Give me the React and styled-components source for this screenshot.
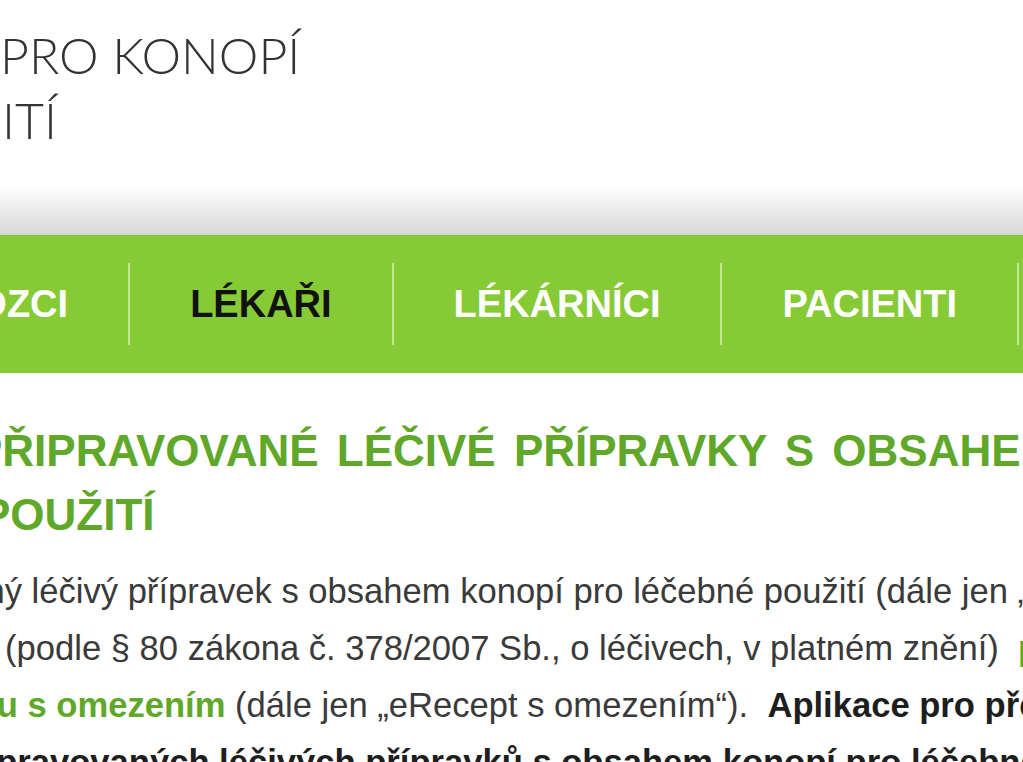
import React from 'react';
import styled, { createGlobalStyle } from 'styled-components';

const GlobalStyle = createGlobalStyle`
  html, body {
    margin: 0;
    padding: 0;
    background: #fff;
  }
  body {
    overflow: hidden;
    font-family: "Liberation Sans", Arial, sans-serif;
  }
`;

// Page frame (the screenshot is a zoomed-in crop of the site)
const Page = styled.div`
  width: 1023px;
  height: 762px;
  overflow: hidden;
  background: #fff;
`;

const Header = styled.header`
  box-sizing: border-box;
  height: 235px;
  padding-top: 23px;
  background: linear-gradient(to bottom, #fff 0, #fff 185px, #d9d9d9 233px);
  border-bottom: 2px solid #d3d2df;
`;

const SiteName = styled.div`
  font-family: Lato, "Open Sans", sans-serif;
  font-weight: 300;
  font-size: 50px;
  line-height: 65px;
  color: #333;
  white-space: nowrap;
`;

const NameLine = styled.div`
  margin-left: ${(p) => p.$shift || 0}px;
`;

const Nav = styled.nav`
  height: 138px;
  background: #86cb35;
  display: flex;
  align-items: center;
  white-space: nowrap;
  overflow: hidden;
`;

const NavItem = styled.a`
  flex: none;
  padding: 0 60px;
  margin-left: ${(p) => p.$shift || 0}px;
  font-weight: bold;
  font-size: 38px;
  color: ${(p) => (p.$active ? '#111' : '#fff')};
  text-decoration: none;
`;

const Divider = styled.span`
  flex: none;
  width: 2px;
  height: 82px;
  background: rgba(255, 255, 255, 0.5);
`;

const Main = styled.main`
  padding-top: 46px;
  overflow: hidden;
  white-space: nowrap;
`;

const Heading = styled.h1`
  margin: 0;
  font-size: 44px;
  line-height: 64px;
  font-weight: bold;
  word-spacing: 6px;
  color: #60a829;
`;

const HeadingLine = styled.span`
  display: block;
  margin-left: ${(p) => p.$shift || 0}px;
`;

const Text = styled.div`
  margin-top: 16px;
  font-size: 34.6px;
  line-height: 57px;
  color: #3a3a3a;
`;

const TextLine = styled.div`
  margin-left: ${(p) => p.$shift || 0}px;
`;

const Strong = styled.strong`
  color: #1e1e1e;
`;

const GreenLink = styled.a`
  color: #60a829;
  font-weight: bold;
  text-decoration: none;
`;

const navItems = [
  { label: 'DOVOZCI', shift: -165 },
  { label: 'LÉKAŘI', active: true },
  { label: 'LÉKÁRNÍCI' },
  { label: 'PACIENTI' },
  { label: 'ODBORNÍCI' },
];

const App = () => (
  <Page>
    <GlobalStyle />
    <Header>
      <SiteName>
        <NameLine>PRO KONOPÍ</NameLine>
        <NameLine $shift={2}>ITÍ</NameLine>
      </SiteName>
    </Header>

    <Nav>
      {navItems.map((item, i) => (
        <React.Fragment key={item.label}>
          {i > 0 && <Divider />}
          <NavItem href="#" $active={item.active} $shift={item.shift}>
            {item.label}
          </NavItem>
        </React.Fragment>
      ))}
    </Nav>

    <Main>
      <Heading>
        <HeadingLine $shift={-27}>PŘIPRAVOVANÉ LÉČIVÉ PŘÍPRAVKY S OBSAHEM KONOPÍ PRO LÉČEBNÉ</HeadingLine>
        <HeadingLine $shift={-19}>POUŽITÍ</HeadingLine>
      </Heading>

      <Text>
        <TextLine $shift={-176}>
          připravovaný léčivý přípravek s obsahem konopí pro léčebné použití (dále jen „IPLP s konopím“)
        </TextLine>
        <TextLine $shift={5}>
          (podle § 80 zákona č. 378/2007 Sb., o léčivech, v platném znění)&nbsp;{' '}
          <GreenLink href="#">předepisuje na elektronickém</GreenLink>
        </TextLine>
        <TextLine $shift={-107}>
          <GreenLink href="#">receptu s omezením</GreenLink> (dále jen „eRecept s omezením“).&nbsp;{' '}
          <Strong>Aplikace pro předepisování</Strong>
        </TextLine>
        <TextLine $shift={-48}>
          <Strong>připravovaných léčivých přípravků s obsahem konopí pro léčebné použití</Strong>
        </TextLine>
      </Text>
    </Main>
  </Page>
);

export default App;
